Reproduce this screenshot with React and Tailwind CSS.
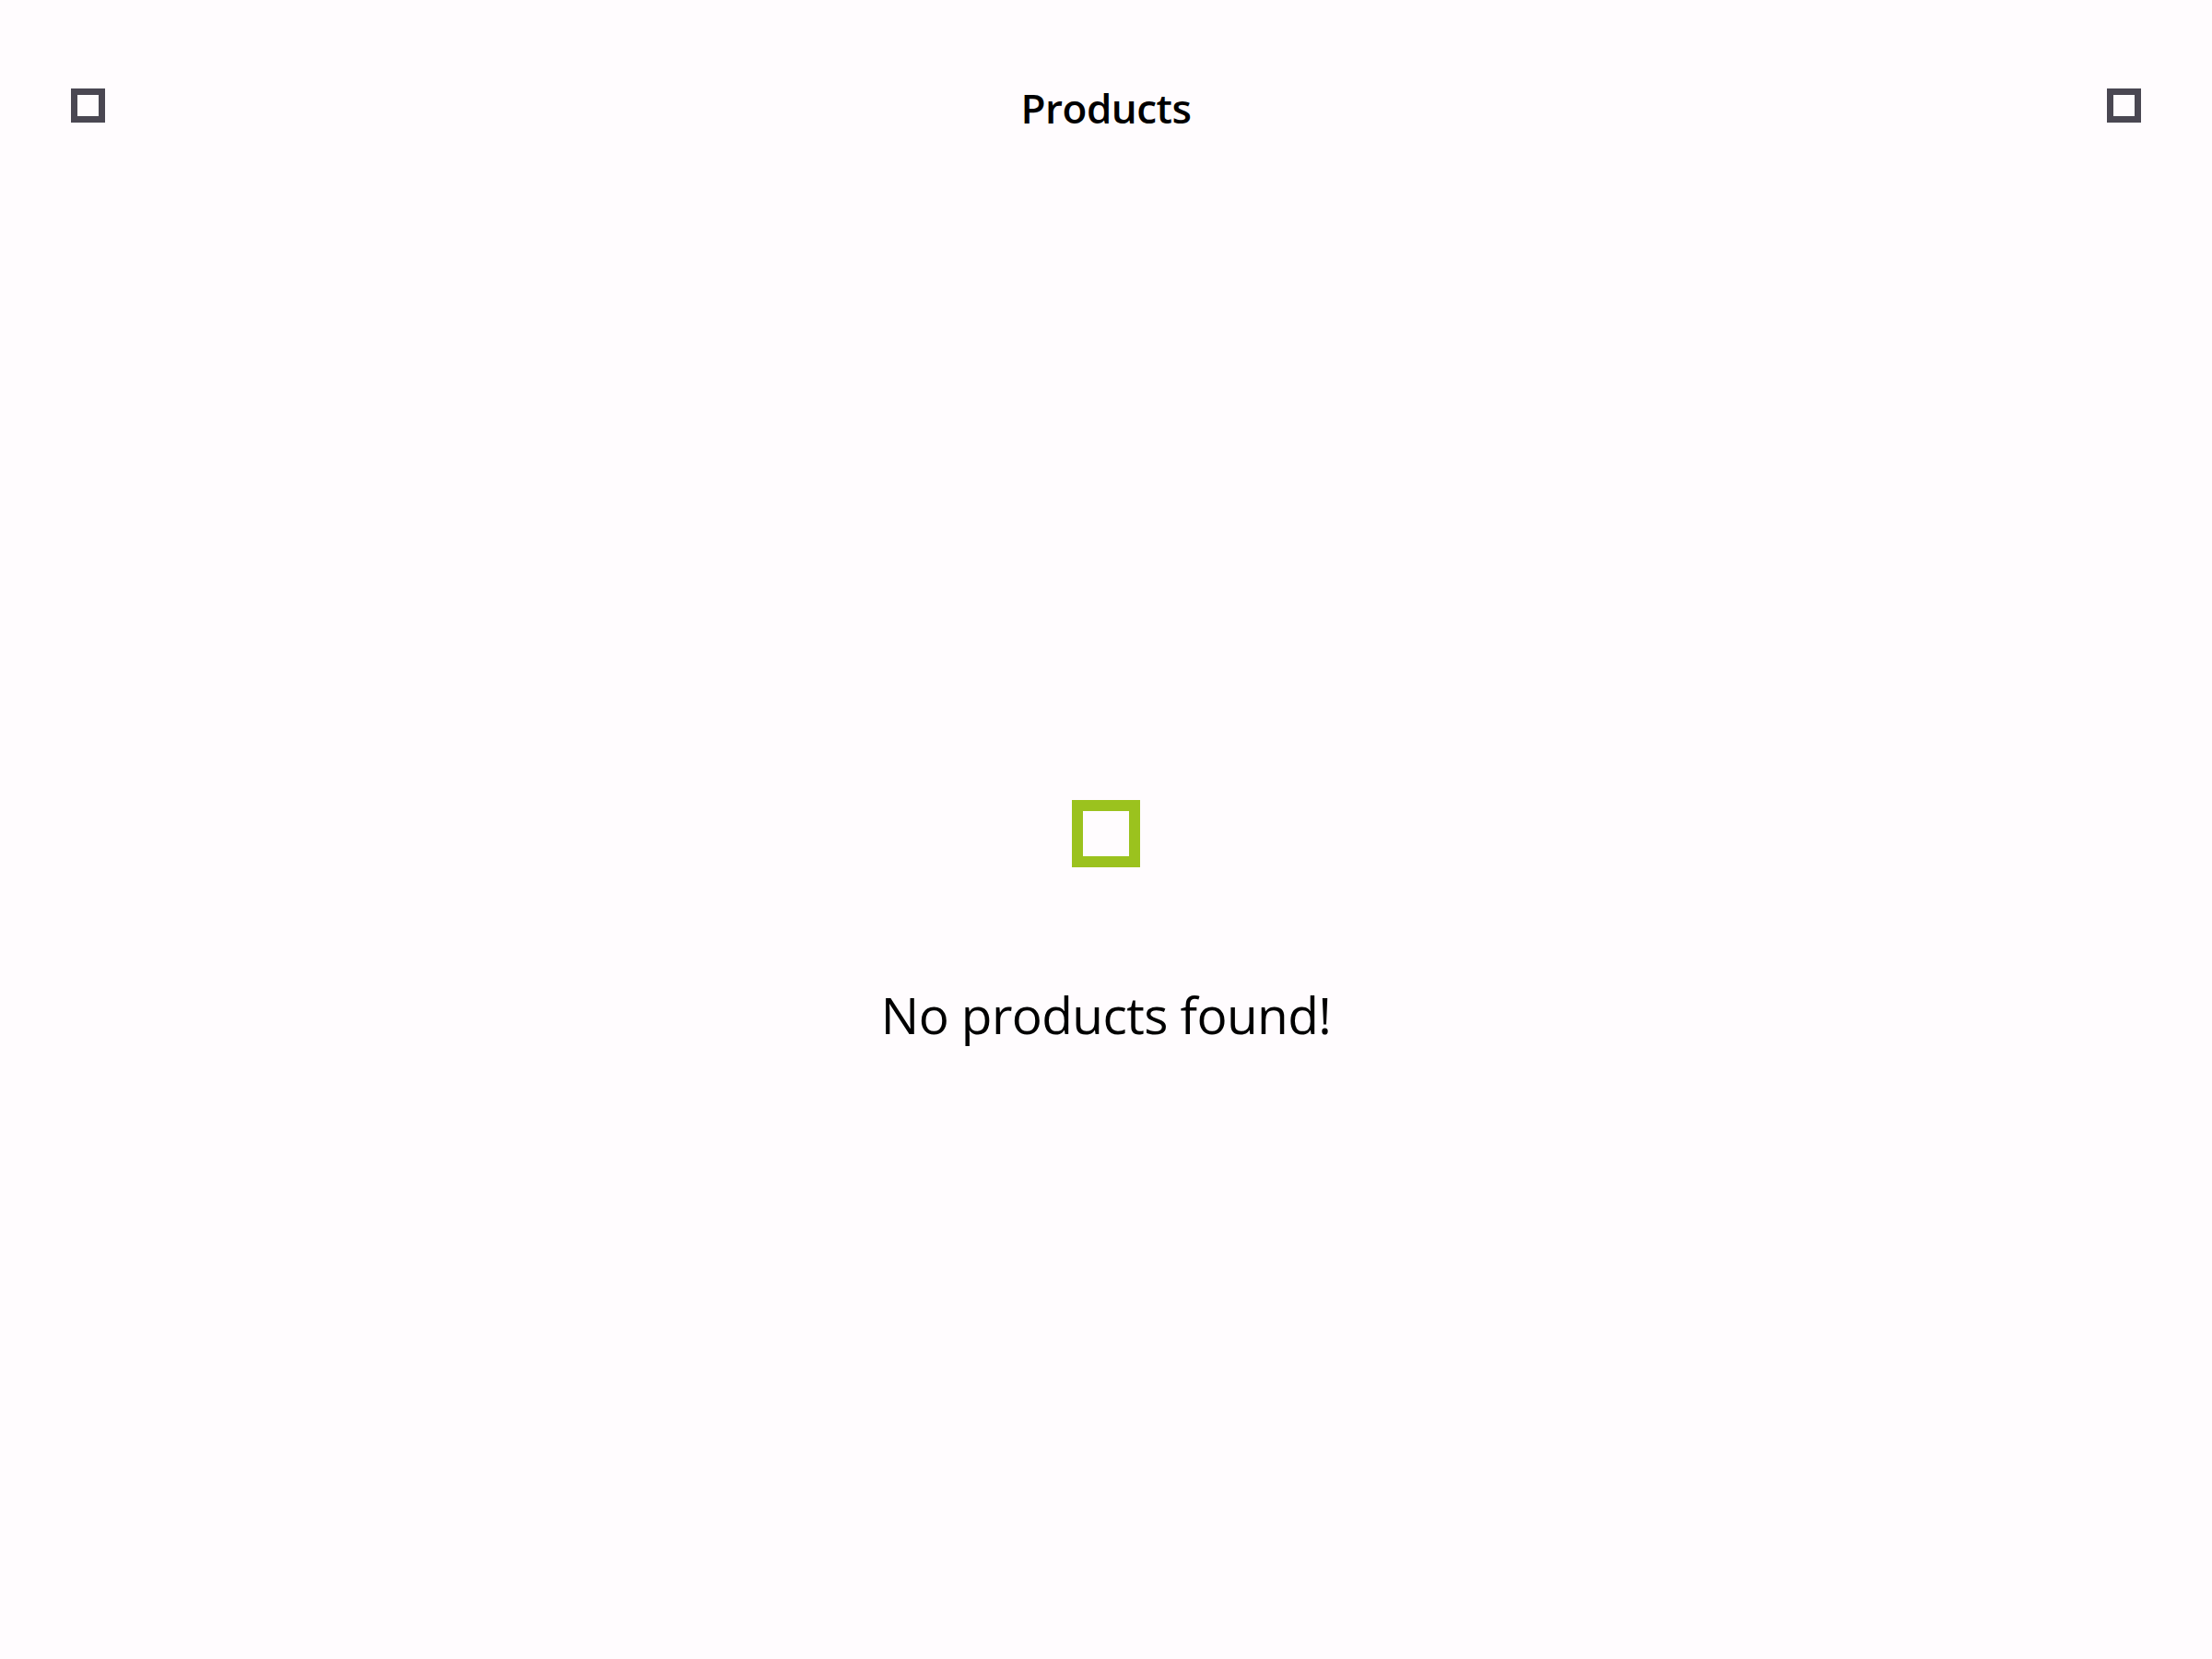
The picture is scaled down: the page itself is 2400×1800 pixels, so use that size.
export default function App() {
  return (
    <div className="w-full h-[1800px] bg-[#fffcfe] flex flex-col" style={{ fontFamily: '"Open Sans", "Noto Sans", sans-serif' }}>
      <header className="flex items-center justify-between px-[77px] pt-[84px] h-[144px]">
        <div className="w-[37px] h-[37px] border-[7px] border-[#4a4752]" />
        <h1 className="mt-[6px] text-[44px] font-semibold text-black leading-none tracking-[-0.5px]">Products</h1>
        <div className="w-[37px] h-[37px] border-[7px] border-[#4a4752]" />
      </header>
      <main className="flex flex-col items-center pt-[724px]">
        <div className="w-[74px] h-[73px] border-[12px] border-[#9bc21e]" />
        <p className="mt-[132px] text-[55px] text-black leading-none tracking-[-0.6px]">No products found!</p>
      </main>
    </div>
  );
}
